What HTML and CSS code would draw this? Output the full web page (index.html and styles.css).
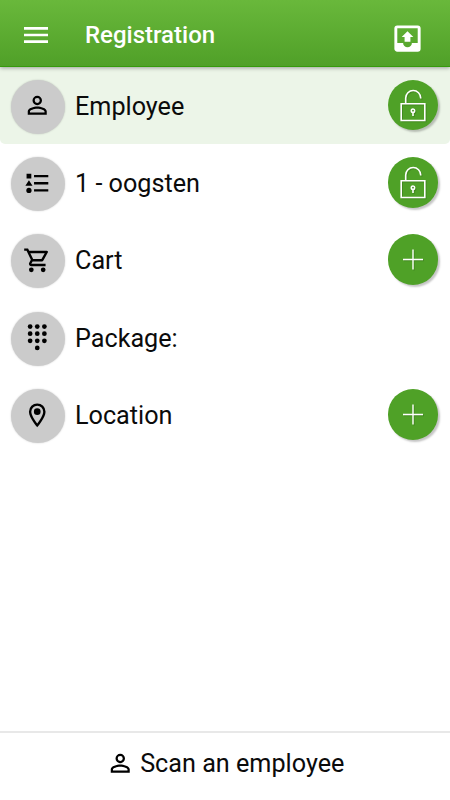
FILE: index.html
```html
<!DOCTYPE html>
<html lang="en">
<head>
<meta charset="utf-8">
<title>Registration</title>
<link rel="stylesheet" href="styles.css">
</head>
<body>
<svg class="defs" aria-hidden="true">
  <symbol id="person" viewBox="0 0 24 24"><path d="M12 5.9a2.1 2.1 0 1 1 0 4.2 2.1 2.1 0 0 1 0-4.2m0 9c2.97 0 6.1 1.46 6.1 2.1v1.1H5.9V17c0-.64 3.13-2.1 6.1-2.1M12 4a4 4 0 1 0 0 8 4 4 0 0 0 0-8m0 9c-2.67 0-8 1.34-8 4v3h16v-3c0-2.66-5.33-4-8-4"/></symbol>
  <symbol id="lock" viewBox="0 0 50 50">
    <g fill="none" stroke="currentColor" stroke-width="1.6"><path d="M13.2 23.7h23.6v16.8H13.2z"/><path d="M17.7 23.5V18a7.5 7.5 0 0 1 15 0v.6"/><circle cx="25" cy="30.7" r="1.7"/><path d="M25 32.2V36"/></g>
  </symbol>
  <symbol id="plus" viewBox="0 0 50 50"><path d="M15 25.5h20M25 15.5v20" fill="none" stroke="currentColor" stroke-width="1.4"/></symbol>
</svg>
<div class="app">
  <header class="bar">
    <svg class="menu" viewBox="0 0 24 24"><path d="M3 18h18v-2H3zM3 13h18v-2H3zM3 6v2h18V6z"/></svg>
    <h1>Registration</h1>
    <svg class="outbox" viewBox="0 0 24 24"><path fill-rule="evenodd" d="M19 3H5a2 2 0 0 0-2 2v14c0 1.1.9 2 2 2h14a2 2 0 0 0 2-2V5a2 2 0 0 0-2-2zm0 12h-4a3 3 0 0 1-6 0H5V5h14zM8 11h2v3.3h4V11h2l-4-4z"/></svg>
  </header>
  <main>
    <div class="row active">
      <span class="disc"><svg class="icon" viewBox="0 0 24 24"><use href="#person"/></svg></span>
      <span class="label">Employee</span>
      <span class="action"><svg><use href="#lock"/></svg></span>
    </div>
    <div class="row">
      <span class="disc"><svg class="icon" viewBox="0 0 24 24"><path d="M9.3 5h12v2h-12zm0 6h12v2h-12zm0 6h12v2h-12zM3 4h4v4H3zM5 9.5 8 14H2z"/><circle cx="5" cy="18" r="2.2"/></svg></span>
      <span class="label">1 - oogsten</span>
      <span class="action"><svg><use href="#lock"/></svg></span>
    </div>
    <div class="row">
      <span class="disc"><svg class="icon" viewBox="0 0 24 24"><path d="M15.55 13c.75 0 1.41-.41 1.75-1.03l3.58-6.49A.996.996 0 0 0 20.01 4H5.21l-.94-2H1v2h2l3.6 7.59-1.35 2.44C4.52 15.37 5.48 17 7 17h12v-2H7l1.1-2zM6.16 6h12.15l-2.76 5H8.53zM7 18a2 2 0 1 0 0 4 2 2 0 0 0 0-4m10 0a2 2 0 1 0 0 4 2 2 0 0 0 0-4"/></svg></span>
      <span class="label">Cart</span>
      <span class="action"><svg><use href="#plus"/></svg></span>
    </div>
    <div class="row">
      <span class="disc"><svg class="icon" viewBox="0 0 24 24"><circle cx="6" cy="3" r="2"/><circle cx="12" cy="3" r="2"/><circle cx="18" cy="3" r="2"/><circle cx="6" cy="9" r="2"/><circle cx="12" cy="9" r="2"/><circle cx="18" cy="9" r="2"/><circle cx="6" cy="15" r="2"/><circle cx="12" cy="15" r="2"/><circle cx="18" cy="15" r="2"/><circle cx="12" cy="21" r="2"/></svg></span>
      <span class="label">Package:</span>
    </div>
    <div class="row">
      <span class="disc"><svg class="icon" viewBox="0 0 24 24"><path d="M12 2a7 7 0 0 0-7 7c0 5.25 7 13 7 13s7-7.75 7-13a7 7 0 0 0-7-7M7 9a5 5 0 0 1 10 0c0 2.88-2.88 7.19-5 9.88C9.92 16.21 7 11.85 7 9"/><circle cx="12" cy="9" r="2.8"/></svg></span>
      <span class="label">Location</span>
      <span class="action"><svg><use href="#plus"/></svg></span>
    </div>
  </main>
  <footer><svg class="icon" viewBox="0 0 24 24"><use href="#person"/></svg><span>Scan an employee</span></footer>
</div>
</body>
</html>
```
FILE: styles.css
```css
* { box-sizing: border-box; }
body { margin: 0; background: #fff; color: #0b0b0b; font-family: Roboto, sans-serif; }
.defs { display: none; }
.app { display: flex; flex-direction: column; width: 450px; height: 800px; overflow: hidden; }
svg { display: block; flex: none; fill: currentColor; }

.bar {
  display: flex;
  flex: none;
  align-items: center;
  height: 67px;
  padding: 4px 26px 0 20px;
  color: #fff;
  background: linear-gradient(#69b83b, #50a028);
  border-bottom: 1px solid #359a0c;
  box-shadow: 0 1px 4px rgba(0, 0, 0, .35);
  z-index: 1;
}
.menu { width: 32px; height: 32px; }
.bar h1 { flex: 1; margin: 0 0 0 33px; font-size: 24px; line-height: 30px; font-weight: 500; }
.outbox { width: 35px; height: 35px; margin: 7px -.5px 0 0; }

main { flex: 1; }
.row { display: flex; align-items: center; height: 77.3px; padding: 2px 12px 0 11px; }
.active { background: #ecf5e8; border-radius: 0 0 5px 5px; }
.disc {
  display: flex;
  align-items: center;
  justify-content: center;
  flex: none;
  width: 54px;
  height: 54px;
  padding: 0 2px 2px 0;
  border-radius: 50%;
  background: #cbcbcb;
  box-shadow: 0 0 2px rgba(0, 0, 0, .2);
}
.icon { width: 28.5px; height: 28.5px; color: #000; overflow: visible; }
.label { flex: 1; margin: 0 0 0 10px; font-size: 25.2px; line-height: 32px; }
.action {
  width: 50.5px;
  height: 50.5px;
  margin-top: -3px;
  border-radius: 50%;
  background: #4fa127;
  color: #fff;
  box-shadow: 2px 2px 2px rgba(0, 0, 0, .23);
}
.action svg { width: 50px; height: 50px; filter: drop-shadow(1px 1px 0 rgba(0, 0, 0, .15)); }

footer {
  display: flex;
  flex: none;
  align-items: center;
  justify-content: center;
  gap: 6px;
  height: 69px;
  padding-bottom: 6px;
  border-top: 2px solid #e8e8e8;
  font-size: 25.2px;
  line-height: 32px;
}
footer .icon { margin-top: -1px; }
```
